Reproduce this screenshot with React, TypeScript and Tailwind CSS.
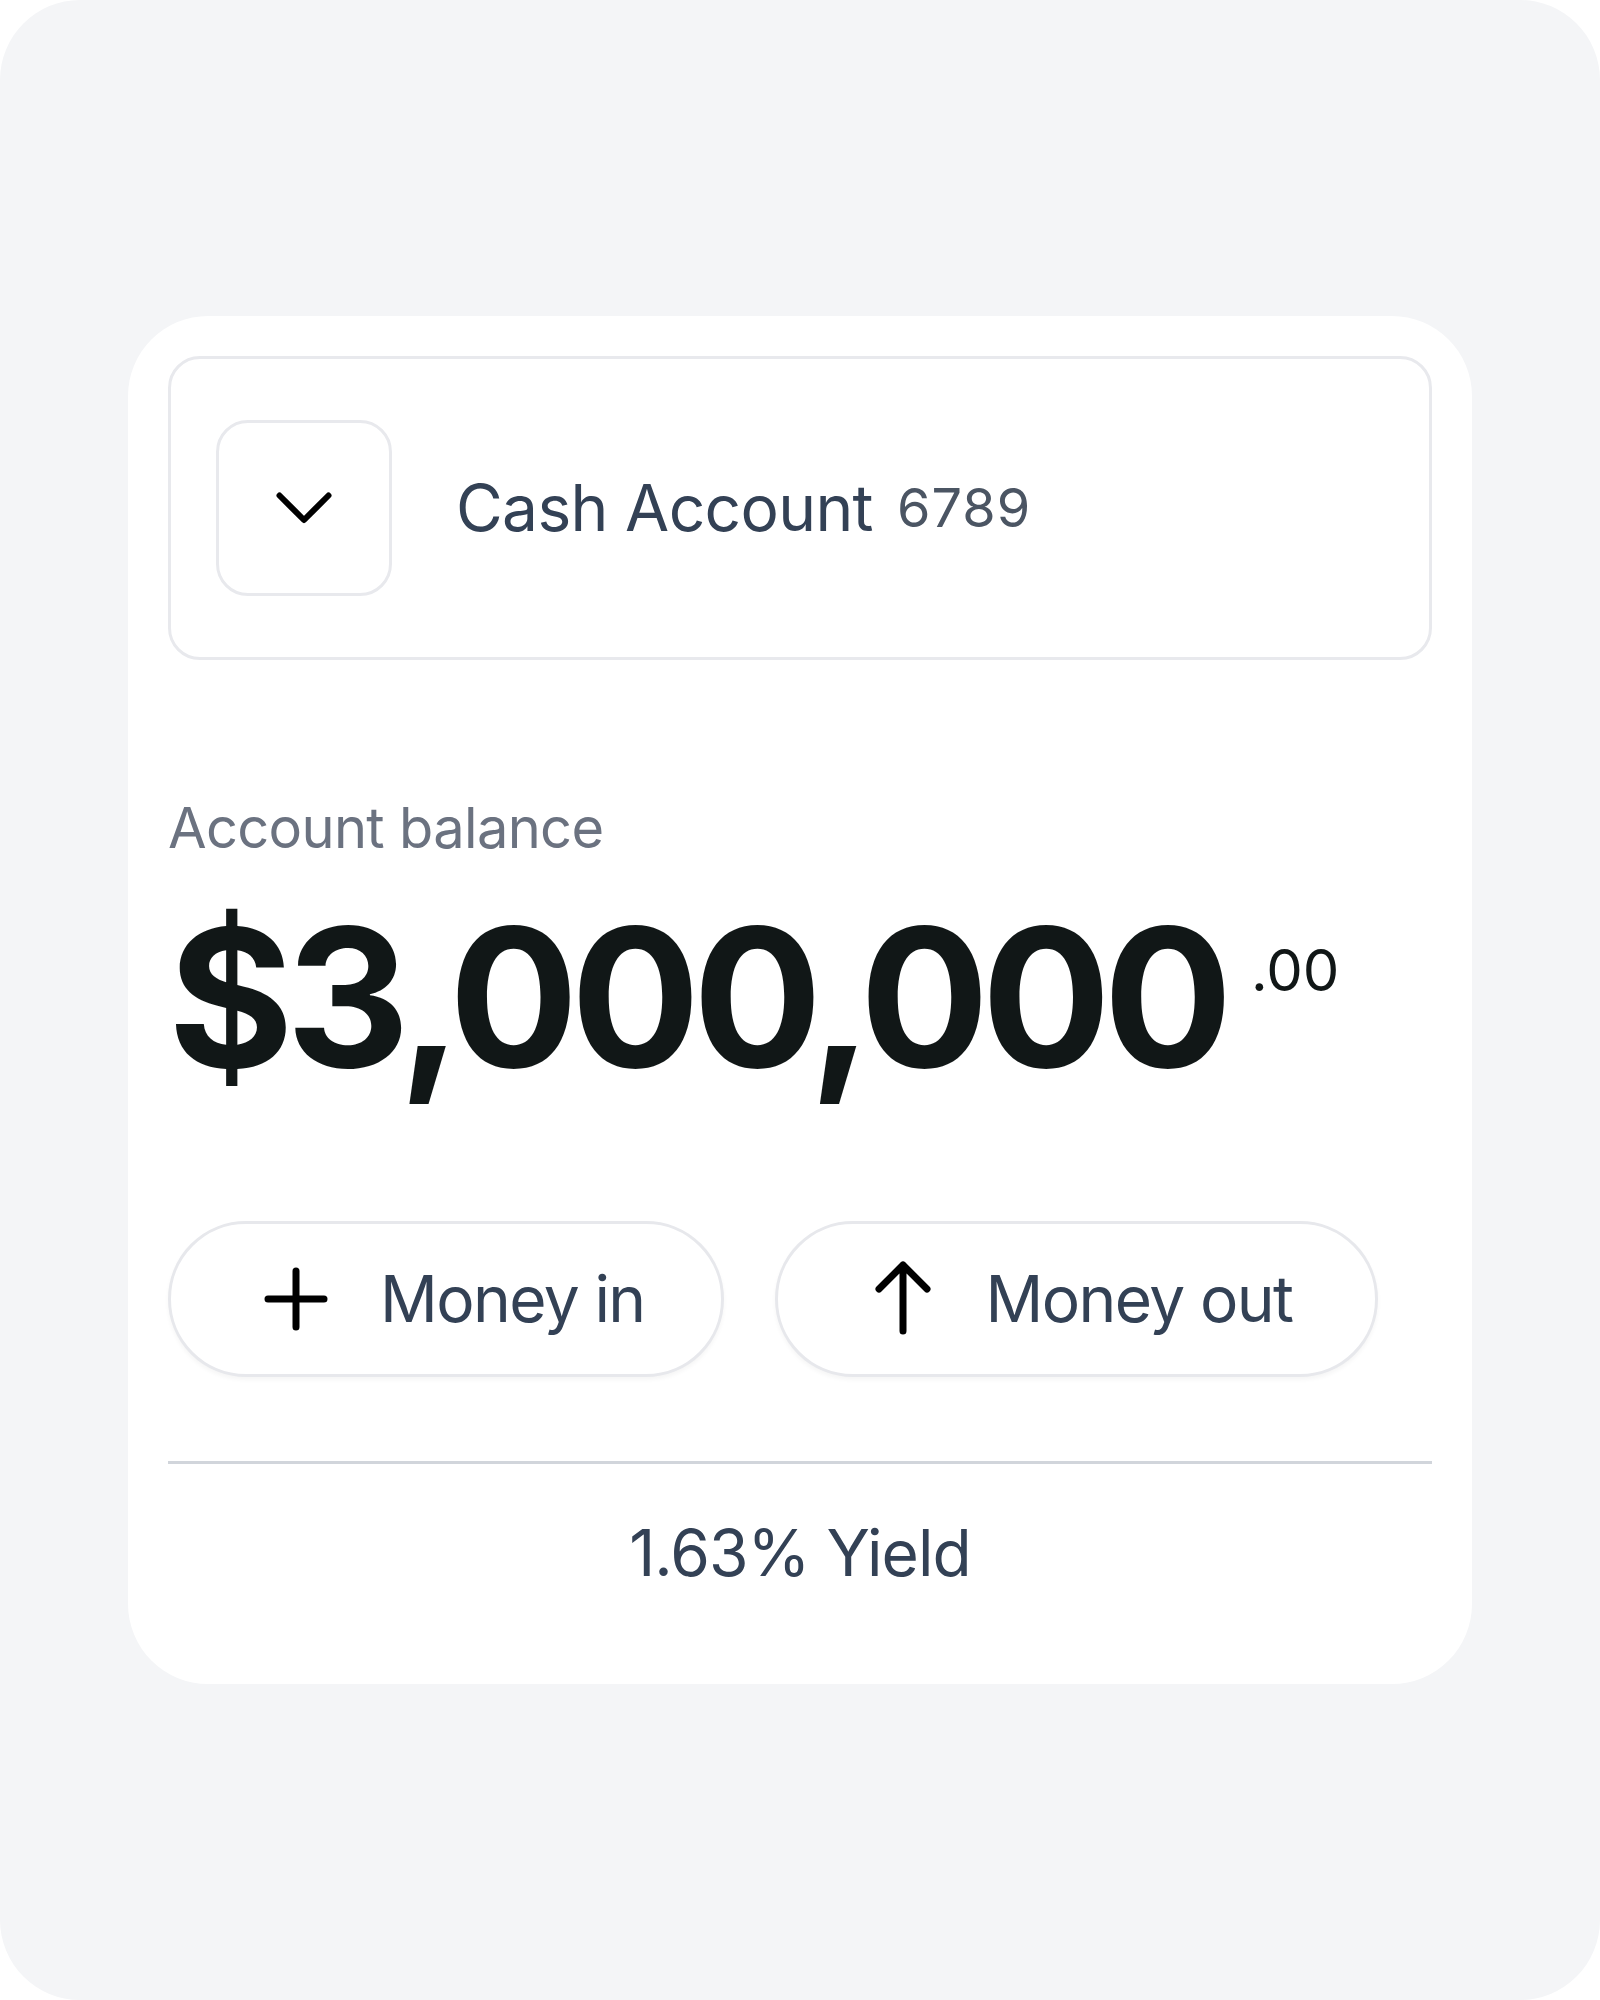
import React from "react";

function Chevron() {
  return (
    <svg width="56" height="32" viewBox="0 0 56 32" fill="none">
      <polyline points="3.5,3.5 28,28 52.5,3.5" stroke="#000" strokeWidth="6" strokeLinecap="round" strokeLinejoin="round" />
    </svg>
  );
}

function PlusIcon() {
  return (
    <svg width="64" height="64" viewBox="0 0 64 64" fill="none" className="shrink-0">
      <path d="M32 4V60M4 32H60" stroke="#000" strokeWidth="7" strokeLinecap="round" />
    </svg>
  );
}

function ArrowUpIcon() {
  return (
    <svg width="64" height="76" viewBox="0 0 64 76" fill="none" className="shrink-0">
      <path d="M32 70V4M8 28L32 4L56 28" stroke="#000" strokeWidth="7" strokeLinecap="round" strokeLinejoin="round" />
    </svg>
  );
}

export default function App() {
  return (
    <div className="w-[1600px] h-[2000px] bg-[#f4f5f7] rounded-[80px] flex justify-center pt-[316px] font-['Inter','Noto_Sans',sans-serif]">
      <div className="w-[1344px] h-[1368px] bg-white rounded-[80px] px-[40px] pt-[40px] flex flex-col">
        {/* Account selector */}
        <div className="h-[304px] border-[3px] border-[#e8e9ed] rounded-[32px] pl-[45px] flex items-center gap-[64px]">
          <div className="w-[176px] h-[176px] border-[3px] border-[#e8e9ed] rounded-[32px] flex items-center justify-center">
            <Chevron />
          </div>
          <div className="flex items-center gap-[24px]">
            <span className="text-[64px] leading-none text-[#334155] tracking-[-0.01em]">Cash Account</span>
            <span className="text-[54px] leading-none text-[#4b5563] tracking-[0.02em]">6789</span>
          </div>
        </div>

        {/* Balance */}
        <div className="mt-[140px] text-[56px] leading-none text-[#6b7280] tracking-[-0.012em]">Account balance</div>
        <div className="mt-[45px] flex items-start">
          <span className="text-[192px] leading-none font-bold text-[#111717] tracking-[-0.04em]">$3,000,000</span>
          <span className="mt-[40px] ml-[26px] text-[58px] leading-none text-[#111717]">.00</span>
        </div>

        {/* Buttons */}
        <div className="mt-[128px] flex gap-[51px]">
          <button className="h-[156px] rounded-full border-[3px] border-[#e7e8ec] bg-white shadow-[0_3px_4px_rgba(0,0,0,0.04)] pl-[93px] pr-[76px] flex items-center gap-[52px]">
            <PlusIcon />
            <span className="text-[64px] leading-none text-[#334155] tracking-[-0.025em]">Money in</span>
          </button>
          <button className="h-[156px] rounded-full border-[3px] border-[#e7e8ec] bg-white shadow-[0_3px_4px_rgba(0,0,0,0.04)] pl-[93px] pr-[83px] flex items-center gap-[51px]">
            <ArrowUpIcon />
            <span className="text-[64px] leading-none text-[#334155] tracking-[-0.025em]">Money out</span>
          </button>
        </div>

        {/* Divider */}
        <div className="mt-[84px] h-[3px] bg-[#d1d5db]" />

        {/* Yield */}
        <div className="mt-[57px] text-center text-[64px] leading-none text-[#334155] tracking-[-0.015em]">1.63% Yield</div>
      </div>
    </div>
  );
}
